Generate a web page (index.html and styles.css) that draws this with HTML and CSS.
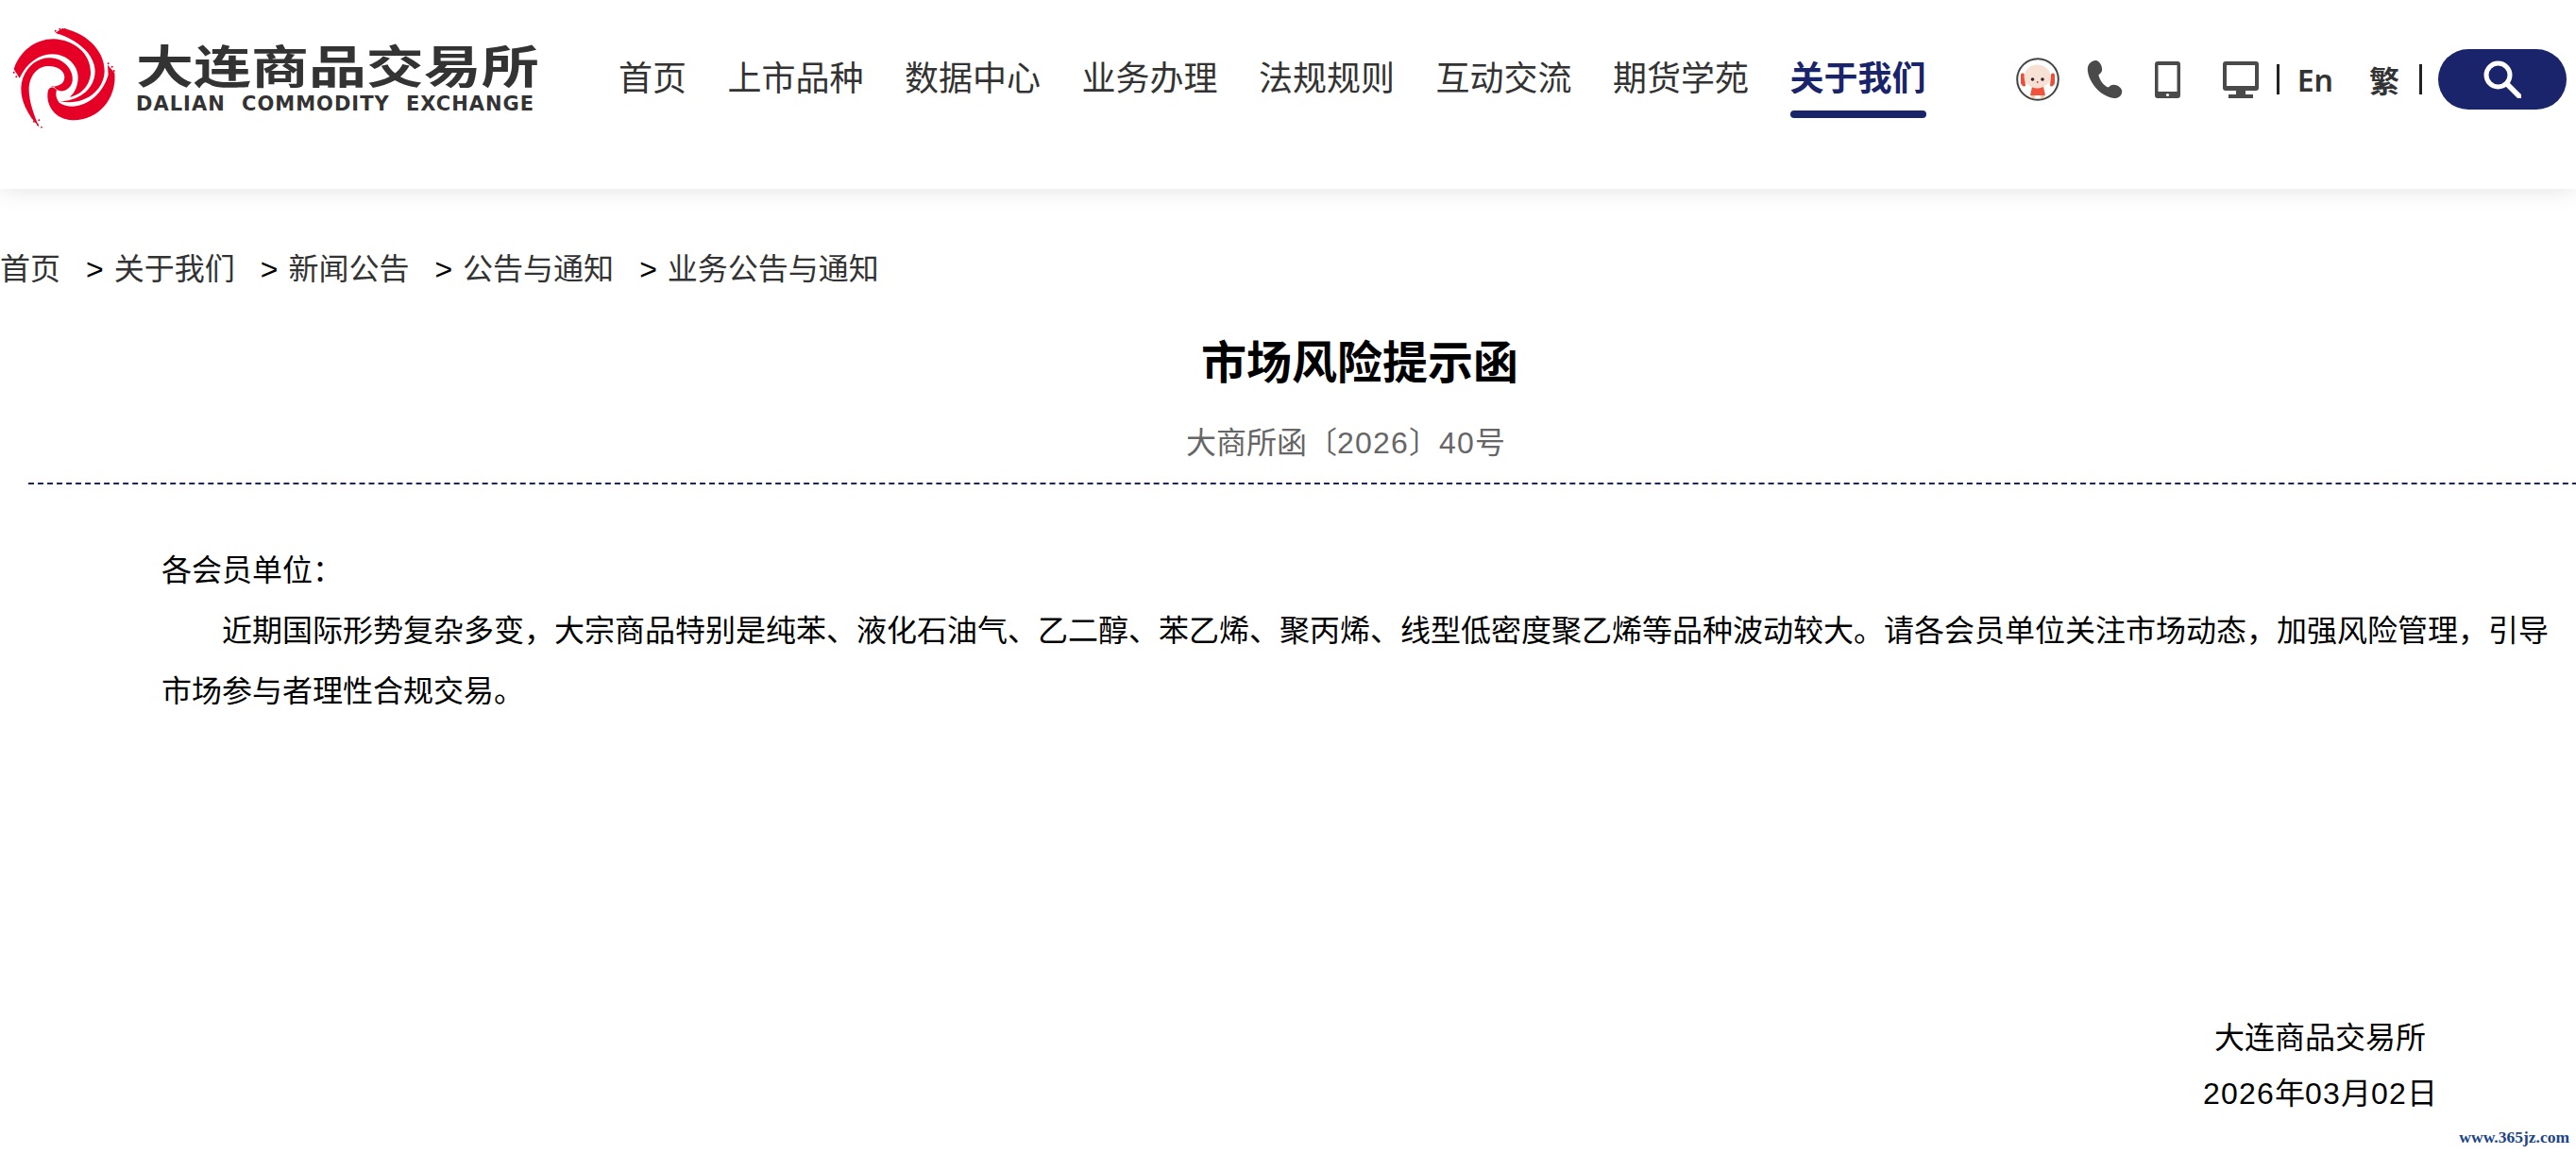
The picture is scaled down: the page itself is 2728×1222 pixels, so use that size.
FILE: index.html
```html
<!DOCTYPE html>
<html lang="zh-CN">
<head>
    <meta charset="UTF-8">
    <meta name="viewport" content="width=device-width, initial-scale=1.0">
    <title>市场风险提示函</title>
    <link rel="stylesheet" href="styles.css">
</head>
<body>
    <header class="site-header">
        <a class="logo" href="#">
            <svg class="logo-mark" viewBox="0 0 420 390" aria-hidden="true">
                <g fill="#e60026">
                    <path d="M44 160L62 188C85 140 125 112 165 112C215 112 250 150 248 190C246 215 238 235 222 248C262 240 288 205 288 170C288 110 235 66 170 64C110 64 62 105 44 160Z"/>
                    <path d="M176 44L198 30C265 40 332 95 332 165C332 225 270 278 190 262C240 262 302 230 302 165C300 110 245 65 176 44Z"/>
                    <path d="M342 146L364 172C372 255 310 324 230 322C175 320 145 275 152 232C154 215 170 212 180 226C176 240 178 252 188 266C240 300 320 260 344 178Z"/>
                    <path d="M125 345L100 315C70 270 60 230 72 190C88 145 125 122 160 124C205 126 235 165 230 198C226 222 200 236 182 226C172 216 168 212 162 216C184 214 205 208 205 185C205 160 175 148 150 150C115 152 92 185 92 225C92 265 110 310 125 345Z"/>
                    <circle cx="176" cy="38" r="3"/><circle cx="186" cy="46" r="3"/><circle cx="190" cy="32" r="3"/><circle cx="206" cy="33" r="3"/>
                    <circle cx="344" cy="142" r="3"/><circle cx="356" cy="152" r="3"/><circle cx="348" cy="162" r="3"/><circle cx="362" cy="165" r="3"/>
                    <circle cx="44" cy="170" r="3"/><circle cx="52" cy="184" r="3"/><circle cx="60" cy="172" r="3"/><circle cx="48" cy="158" r="3"/>
                    <circle cx="132" cy="344" r="2.5"/><circle cx="120" cy="336" r="3"/><circle cx="108" cy="326" r="3"/><circle cx="124" cy="322" r="3"/>
                </g>
            </svg>
            <div class="logo-text">
                <div class="logo-cn">大连商品交易所</div>
                <div class="logo-en">DALIAN COMMODITY EXCHANGE</div>
            </div>
        </a>
        <nav class="main-nav">
            <a href="#">首页</a>
            <a href="#">上市品种</a>
            <a href="#">数据中心</a>
            <a href="#">业务办理</a>
            <a href="#">法规规则</a>
            <a href="#">互动交流</a>
            <a href="#">期货学苑</a>
            <a href="#" class="active">关于我们</a>
        </nav>
        <div class="header-tools">
            <svg class="tool-avatar" viewBox="0 0 46 46" aria-hidden="true">
                <circle cx="23" cy="23" r="21.8" fill="#fff" stroke="#444" stroke-width="2"/>
                <path fill="#e8503a" d="M5 18c1-2 3-2 4 0l1 12c-2 1-4 0-5-3zM41 18c-1-2-3-2-4 0l-1 12c2 1 4 0 5-3z"/>
                <path fill="#f5c9a8" d="M16 38h4v5h-4zM26 38h4v5h-4z"/>
                <path fill="#f1533c" d="M17 31h12l2 9H15z"/>
                <ellipse cx="22.5" cy="20" rx="14" ry="12.5" fill="#f7e0d4"/>
                <circle cx="17.5" cy="23" r="1.8" fill="#3a2320"/>
                <circle cx="28" cy="23" r="1.8" fill="#3a2320"/>
                <circle cx="22.7" cy="26" r="0.9" fill="#c8413a"/>
            </svg>
            <svg class="tool-phone" viewBox="0 0 40 42" aria-hidden="true">
                <path fill="#4a4a4a" d="M9 0C4 1 0 5 1 12C3 26 16 40 30 42C36 43 40 38 39 33C38 30 34 27 30 27C27 27 25 29 24 30C18 28 14 21 13 16C15 15 17 13 17 10C17 5 13 -1 9 0Z"/>
            </svg>
            <svg class="tool-mobile" viewBox="0 0 27 39" aria-hidden="true">
                <path fill="#4a4a4a" fill-rule="evenodd" d="M3 0H24C26 0 27 1 27 3V36C27 38 26 39 24 39H3C1 39 0 38 0 36V3C0 1 1 0 3 0ZM3.5 4V32H23.5V4Z"/>
                <circle cx="13.5" cy="35.5" r="1.6" fill="#fff"/>
            </svg>
            <svg class="tool-monitor" viewBox="0 0 38 39" aria-hidden="true">
                <path fill="#4a4a4a" fill-rule="evenodd" d="M3 0H35C37 0 38 1 38 3V28C38 30 37 31 35 31H24V35H32V39H6V35H14V31H3C1 31 0 30 0 28V3C0 1 1 0 3 0ZM4 4V26H34V4Z"/>
            </svg>
            <span class="tool-sep"></span>
            <a class="tool-lang lang-en" href="#">En</a>
            <a class="tool-lang lang-tw" href="#">繁</a>
            <span class="tool-sep sep-last"></span>
            <button class="search-btn" aria-label="搜索">
                <svg viewBox="0 0 40 40" aria-hidden="true">
                    <circle cx="15.5" cy="15.5" r="12.5" fill="none" stroke="#fff" stroke-width="5"/>
                    <path d="M25 25L38 38" stroke="#fff" stroke-width="5.5" stroke-linecap="round"/>
                </svg>
            </button>
        </div>
    </header>

    <div class="breadcrumb">
        <a href="#">首页</a>
        <a href="#"><span class="crumb-arrow">&gt;</span>关于我们</a>
        <a href="#"><span class="crumb-arrow">&gt;</span>新闻公告</a>
        <a href="#"><span class="crumb-arrow">&gt;</span>公告与通知</a>
        <a href="#"><span class="crumb-arrow">&gt;</span>业务公告与通知</a>
    </div>

    <main class="article">
        <h1 class="article-title">市场风险提示函</h1>
        <p class="article-no">大商所函〔<span class="num">2026</span>〕<span class="num">40</span>号</p>
        <div class="article-body">
            <p>各会员单位：</p>
            <p class="indent">近期国际形势复杂多变，大宗商品特别是纯苯、液化石油气、乙二醇、苯乙烯、聚丙烯、线型低密度聚乙烯等品种波动较大。请各会员单位关注市场动态，加强风险管理，引导市场参与者理性合规交易。</p>
        </div>
        <div class="article-sign">
            <p>大连商品交易所</p>
            <p><span class="num">2026</span>年<span class="num">03</span>月<span class="num">02</span>日</p>
        </div>
    </main>

    <div class="watermark">www.365jz.com</div>
</body>
</html>
```

FILE: styles.css
```css
html,
body {
    margin: 0;
    padding: 0;
    height: 1222px;
    overflow: hidden;
    background-color: #fff;
}

body {
    position: relative;
    font-family: "Liberation Sans", "Noto Sans CJK SC", sans-serif;
    color: #000;
}

a {
    color: inherit;
    text-decoration: none;
}

p {
    margin: 0;
}

.num {
    letter-spacing: 1.2px;
}

.site-header {
    display: flex;
    align-items: flex-start;
    height: 200px;
    background-color: #fff;
    box-shadow: 0 0 24px rgba(0, 0, 0, 0.12);
}

.logo {
    display: flex;
    flex: none;
    margin-top: 20px;
    width: 655px;
}

.logo-mark {
    width: 140px;
    height: 130px;
    flex: none;
}

.logo-text {
    margin-left: 4px;
    padding-top: 30px;
    color: #333;
}

.logo-cn {
    font-size: 48px;
    font-weight: 700;
    line-height: 44px;
    white-space: nowrap;
    transform: scaleX(1.27);
    transform-origin: left center;
}

.logo-en {
    margin-top: 6px;
    font-family: "DejaVu Sans", sans-serif;
    font-size: 21px;
    font-weight: 700;
    line-height: 20px;
    letter-spacing: 1px;
    word-spacing: 9px;
    white-space: nowrap;
}

.main-nav {
    display: flex;
    gap: 43.5px;
    margin-top: 56px;
    font-size: 36px;
    line-height: 56px;
    color: #333;
}

.main-nav a {
    display: flex;
    flex-direction: column;
    white-space: nowrap;
}

.main-nav .active {
    font-weight: 700;
    color: #1a246b;
}

.main-nav .active::after {
    content: "";
    height: 8px;
    margin-top: 5px;
    border-radius: 4px;
    background-color: #1a246b;
}

.header-tools {
    display: flex;
    align-items: center;
    margin: 52px 0 0 95px;
    height: 64px;
}

.tool-avatar {
    width: 46px;
    height: 46px;
    flex: none;
}

.tool-phone {
    width: 38px;
    height: 40px;
    margin-left: 29px;
    flex: none;
}

.tool-mobile {
    width: 27px;
    height: 39px;
    margin-left: 34px;
    flex: none;
}

.tool-monitor {
    width: 38px;
    height: 39px;
    margin-left: 45px;
    flex: none;
}

.tool-sep {
    width: 3px;
    height: 32px;
    margin-left: 19px;
    background-color: #222;
    flex: none;
}

.tool-lang {
    font-size: 32px;
    color: #333;
}

.lang-en {
    margin-left: 19px;
    font-family: "Noto Sans", sans-serif;
    font-weight: 600;
}

.lang-tw {
    margin-left: 38px;
    font-weight: 700;
}

.sep-last {
    margin-left: 21px;
}

.search-btn {
    display: flex;
    align-items: center;
    justify-content: center;
    flex: none;
    width: 136px;
    height: 64px;
    margin-left: 17px;
    padding: 0;
    border: none;
    border-radius: 32px;
    background-color: #1a246b;
}

.search-btn svg {
    width: 40px;
    height: 40px;
}

.breadcrumb {
    display: flex;
    gap: 27px;
    margin-top: 60px;
    font-size: 32px;
    line-height: 50px;
    color: #333;
}

.crumb-arrow {
    color: #000;
    margin-right: 11px;
}

.article {
    width: 2820px;
    margin-left: 30px;
}

.article-title {
    margin: 50px 0 0;
    font-size: 48px;
    line-height: 50px;
    font-weight: 700;
    text-align: center;
}

.article-no {
    margin-top: 34px;
    padding-right: 30px;
    font-size: 32px;
    line-height: 50px;
    text-align: center;
    color: #666;
}

.article-body {
    margin-top: 17px;
    padding: 59px 130px 0 141px;
    border-top: 2px dashed #1a246b;
    font-size: 32px;
    line-height: 64px;
}

.indent {
    text-indent: 64px;
}

.article-sign {
    width: 300px;
    margin: 306px 0 0 2277px;
    font-size: 32px;
    line-height: 59px;
    text-align: center;
}

.watermark {
    position: absolute;
    right: 7px;
    bottom: 7px;
    font-family: "Liberation Serif", serif;
    font-size: 17.5px;
    font-weight: 700;
    color: #1c4587;
}
```
